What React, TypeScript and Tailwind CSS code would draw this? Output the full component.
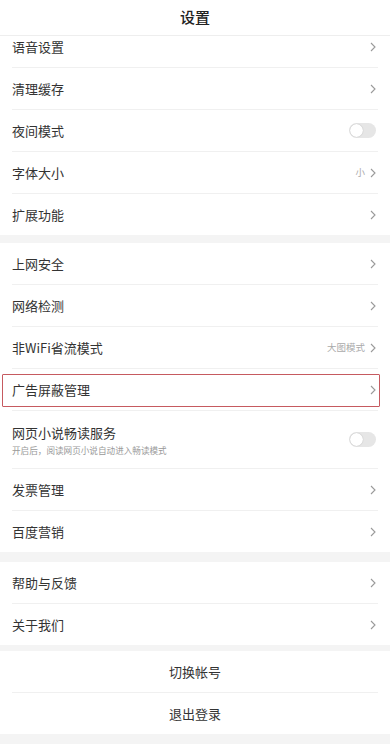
import React from 'react';

const font = { fontFamily: '"Noto Sans CJK SC", "Noto Sans", sans-serif' };

function Chevron() {
  return (
    <svg width="6" height="10" viewBox="0 0 6 10" className="shrink-0">
      <polyline points="1,1 5,5 1,9" fill="none" stroke="#9a9a9a" strokeWidth="1.1" />
    </svg>
  );
}

function Toggle() {
  return (
    <div className="w-[27px] h-[15px] rounded-full bg-[#e6e6e6] relative shrink-0">
      <div className="absolute left-[1px] top-[1px] w-[13px] h-[13px] rounded-full bg-white shadow-[0_0_1px_rgba(0,0,0,0.3)]" />
    </div>
  );
}

function Row({ label, value, toggle, sub, last, highlight, tall }: any) {
  return (
    <div className="relative">
      <div
        className={`flex items-center justify-between pl-3 pr-[14px] ${tall ? 'h-[57px]' : 'h-[41px]'}`}
      >
        <div className="flex flex-col">
          <span className="text-[13px] text-[#333] leading-[18px]">{label}</span>
          {sub && <span className="text-[8.6px] text-[#999] leading-[12px] mt-[2px]">{sub}</span>}
        </div>
        <div className="flex items-center gap-[5px]">
          {value && <span className="text-[9.5px] text-[#aaa]">{value}</span>}
          {toggle ? <Toggle /> : <Chevron />}
        </div>
      </div>
      {!last && <div className="mx-3 h-px bg-[#f0f0f0]" />}
      {highlight && (
        <div className="absolute left-[2px] right-[10px] top-[5px] bottom-[4px] border-[1.5px] border-[#c65a60] rounded-[1px] pointer-events-none" />
      )}
    </div>
  );
}

function Group({ children, gap = 'mb-2' }: any) {
  return <div className={`bg-white ${gap}`}>{children}</div>;
}

export default function App() {
  return (
    <div className="w-[390px] h-[744px] bg-[#f4f4f4] overflow-hidden flex flex-col" style={font}>
      <div className="h-[36px] shrink-0 bg-white flex items-center justify-center border-b border-[#eeeeee] relative z-10">
        <span className="text-[15px] font-medium text-[#222]">设置</span>
      </div>
      <div className="flex-1 overflow-hidden">
        <div className="-mt-[10px]">
          <Group>
            <Row label="语音设置" />
            <Row label="清理缓存" />
            <Row label="夜间模式" toggle />
            <Row label="字体大小" value="小" />
            <Row label="扩展功能" last />
          </Group>
          <Group gap="mb-[10px]">
            <Row label="上网安全" />
            <Row label="网络检测" />
            <Row label="非WiFi省流模式" value="大图模式" />
            <Row label="广告屏蔽管理" highlight />
            <Row label="网页小说畅读服务" sub="开启后，阅读网页小说自动进入畅读模式" toggle tall />
            <Row label="发票管理" />
            <Row label="百度营销" last />
          </Group>
          <Group gap="mb-[6px]">
            <Row label="帮助与反馈" />
            <Row label="关于我们" last />
          </Group>
          <div className="bg-white">
            <div className="h-[41px] flex items-center justify-center text-[13px] text-[#333]">切换帐号</div>
            <div className="mx-3 h-px bg-[#f0f0f0]" />
            <div className="h-[41px] flex items-center justify-center text-[13px] text-[#333]">退出登录</div>
          </div>
        </div>
      </div>
    </div>
  );
}
